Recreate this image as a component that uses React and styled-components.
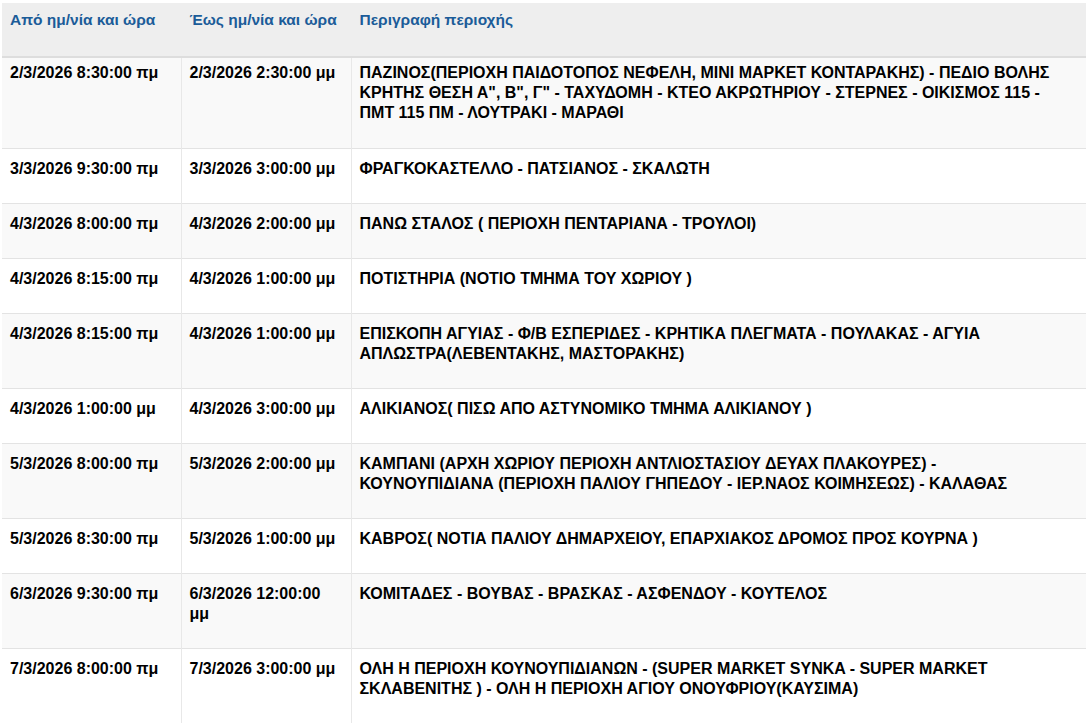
import React from 'react';
import styled, { createGlobalStyle } from 'styled-components';

const GlobalStyle = createGlobalStyle`
  body {
    margin: 0;
    background: #fff;
    font-family: 'Liberation Sans', Arial, sans-serif;
  }
`;

const Wrapper = styled.div`
  padding: 3px 3px 0 2px;
`;

const Table = styled.table`
  width: 100%;
  border-collapse: collapse;
  table-layout: fixed;
`;

const HeadCell = styled.th`
  box-sizing: border-box;
  width: ${(props) => props.$width || 'auto'};
  background: #eeeeee;
  color: #1b5c99;
  font-size: 15.5px;
  font-weight: bold;
  line-height: 18px;
  text-align: left;
  vertical-align: top;
  padding: 8px 8px 0 8px;
  height: 54px;
  border-bottom: 2px solid #dddddd;
  border-left: 1px solid #eeeeee;

  &:first-child {
    border-left: none;
  }
`;

const Row = styled.tr`
  background: ${(props) => (props.$odd ? '#f9f9f9' : '#ffffff')};
  border-bottom: 1px solid #e3e3e3;
`;

const Cell = styled.td`
  box-sizing: border-box;
  color: #000;
  font-size: 16px;
  font-weight: bold;
  line-height: 20px;
  vertical-align: top;
  padding-top: ${(props) => (props.$first ? '5px' : '10px')};
  padding-bottom: ${(props) => (props.$first ? '25px' : '24px')};
  padding-left: 8px;
  padding-right: ${(props) => (props.$area ? '16px' : '9px')};
  border-left: 1px solid #e8e8e8;

  &:first-child {
    border-left: none;
  }
`;

const rows = [
  {
    from: '2/3/2026 8:30:00 πμ',
    to: '2/3/2026 2:30:00 μμ',
    area: 'ΠΑΖΙΝΟΣ(ΠΕΡΙΟΧΗ ΠΑΙΔΟΤΟΠΟΣ ΝΕΦΕΛΗ, ΜΙΝΙ ΜΑΡΚΕΤ ΚΟΝΤΑΡΑΚΗΣ) - ΠΕΔΙΟ ΒΟΛΗΣ ΚΡΗΤΗΣ ΘΕΣΗ Α", Β", Γ" - ΤΑΧΥΔΟΜΗ - ΚΤΕΟ ΑΚΡΩΤΗΡΙΟΥ - ΣΤΕΡΝΕΣ - ΟΙΚΙΣΜΟΣ 115 - ΠΜΤ 115 ΠΜ - ΛΟΥΤΡΑΚΙ - ΜΑΡΑΘΙ',
  },
  {
    from: '3/3/2026 9:30:00 πμ',
    to: '3/3/2026 3:00:00 μμ',
    area: 'ΦΡΑΓΚΟΚΑΣΤΕΛΛΟ - ΠΑΤΣΙΑΝΟΣ - ΣΚΑΛΩΤΗ',
  },
  {
    from: '4/3/2026 8:00:00 πμ',
    to: '4/3/2026 2:00:00 μμ',
    area: 'ΠΑΝΩ ΣΤΑΛΟΣ ( ΠΕΡΙΟΧΗ ΠΕΝΤΑΡΙΑΝΑ - ΤΡΟΥΛΟΙ)',
  },
  {
    from: '4/3/2026 8:15:00 πμ',
    to: '4/3/2026 1:00:00 μμ',
    area: 'ΠΟΤΙΣΤΗΡΙΑ (ΝΟΤΙΟ ΤΜΗΜΑ ΤΟΥ ΧΩΡΙΟΥ )',
  },
  {
    from: '4/3/2026 8:15:00 πμ',
    to: '4/3/2026 1:00:00 μμ',
    area: 'ΕΠΙΣΚΟΠΗ ΑΓΥΙΑΣ - Φ/Β ΕΣΠΕΡΙΔΕΣ - ΚΡΗΤΙΚΑ ΠΛΕΓΜΑΤΑ - ΠΟΥΛΑΚΑΣ - ΑΓΥΙΑ ΑΠΛΩΣΤΡΑ(ΛΕΒΕΝΤΑΚΗΣ, ΜΑΣΤΟΡΑΚΗΣ)',
  },
  {
    from: '4/3/2026 1:00:00 μμ',
    to: '4/3/2026 3:00:00 μμ',
    area: 'ΑΛΙΚΙΑΝΟΣ( ΠΙΣΩ ΑΠΟ ΑΣΤΥΝΟΜΙΚΟ ΤΜΗΜΑ ΑΛΙΚΙΑΝΟΥ )',
  },
  {
    from: '5/3/2026 8:00:00 πμ',
    to: '5/3/2026 2:00:00 μμ',
    area: 'ΚΑΜΠΑΝΙ (ΑΡΧΗ ΧΩΡΙΟΥ ΠΕΡΙΟΧΗ ΑΝΤΛΙΟΣΤΑΣΙΟΥ ΔΕΥΑΧ ΠΛΑΚΟΥΡΕΣ) - ΚΟΥΝΟΥΠΙΔΙΑΝΑ (ΠΕΡΙΟΧΗ ΠΑΛΙΟΥ ΓΗΠΕΔΟΥ - ΙΕΡ.ΝΑΟΣ ΚΟΙΜΗΣΕΩΣ) - ΚΑΛΑΘΑΣ',
  },
  {
    from: '5/3/2026 8:30:00 πμ',
    to: '5/3/2026 1:00:00 μμ',
    area: 'ΚΑΒΡΟΣ( ΝΟΤΙΑ ΠΑΛΙΟΥ ΔΗΜΑΡΧΕΙΟΥ, ΕΠΑΡΧΙΑΚΟΣ ΔΡΟΜΟΣ ΠΡΟΣ ΚΟΥΡΝΑ )',
  },
  {
    from: '6/3/2026 9:30:00 πμ',
    to: '6/3/2026 12:00:00 μμ',
    area: 'ΚΟΜΙΤΑΔΕΣ - ΒΟΥΒΑΣ - ΒΡΑΣΚΑΣ - ΑΣΦΕΝΔΟΥ - ΚΟΥΤΕΛΟΣ',
  },
  {
    from: '7/3/2026 8:00:00 πμ',
    to: '7/3/2026 3:00:00 μμ',
    area: 'ΟΛΗ Η ΠΕΡΙΟΧΗ ΚΟΥΝΟΥΠΙΔΙΑΝΩΝ - (SUPER MARKET SYNKA - SUPER MARKET ΣΚΛΑΒΕΝΙΤΗΣ ) - ΟΛΗ Η ΠΕΡΙΟΧΗ ΑΓΙΟΥ ΟΝΟΥΦΡΙΟΥ(ΚΑΥΣΙΜΑ)',
  },
];

const App = () => (
  <>
    <GlobalStyle />
    <Wrapper>
      <Table>
        <thead>
          <tr>
            <HeadCell $width="179px">Από ημ/νία και ώρα</HeadCell>
            <HeadCell $width="170px">Έως ημ/νία και ώρα</HeadCell>
            <HeadCell>Περιγραφή περιοχής</HeadCell>
          </tr>
        </thead>
        <tbody>
          {rows.map((row, i) => (
            <Row key={i} $odd={i % 2 === 0}>
              <Cell $first={i === 0}>{row.from}</Cell>
              <Cell $first={i === 0}>{row.to}</Cell>
              <Cell $first={i === 0} $area>
                {row.area}
              </Cell>
            </Row>
          ))}
        </tbody>
      </Table>
    </Wrapper>
  </>
);

export default App;
